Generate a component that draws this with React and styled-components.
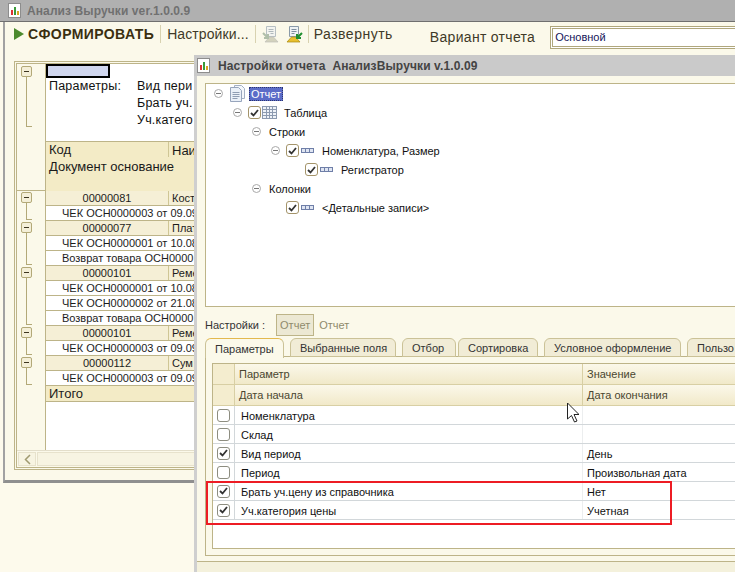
import React from "react";
import styled, { createGlobalStyle } from "styled-components";

const GlobalStyle = createGlobalStyle`
  html, body { margin: 0; padding: 0; background: #fdfaec; }
  body { font-family: "Liberation Sans", Arial, sans-serif; font-size: 11px; color: #1c1c1c; }
  * { box-sizing: border-box; }
`;

const LINE = "#bdb488";

const Desktop = styled.div`
  position: relative;
  width: 735px;
  height: 572px;
  overflow: hidden;
  background: #fdfaec;
`;

/* main report window */
const MainWindow = styled.div`
  width: 735px;
  height: 483px;
  display: flex;
  flex-direction: column;
`;
const TitleBar = styled.div`
  height: 22px;
  flex: none;
  display: flex;
  align-items: center;
  gap: 4px;
  padding-left: 8px;
  background: #b0b0b0;
  border-bottom: 1px solid #6f6f6f;
  font-size: 12px;
  font-weight: bold;
  letter-spacing: 0.1px;
  color: #707070;
`;
const WindowBody = styled.div`
  flex: 1;
  min-height: 0;
  margin-left: 3px;
  display: flex;
  flex-direction: column;
  background: #fbf9ea;
  border-left: 2px solid #a2a2a2;
  border-bottom: 3px solid #8f8f8f;
`;
const Toolbar = styled.div`
  height: 33px;
  flex: none;
  display: flex;
  align-items: center;
  padding-left: 9px;
  color: #3f3a28;
`;
const ToolGroup = styled.div`
  display: flex;
  align-items: center;
  margin-bottom: 9px;
`;
const RunButton = styled.div`
  display: flex;
  align-items: center;
  gap: 4px;
  font-size: 14px;
  font-weight: bold;
  letter-spacing: 0.4px;
  color: #3a2f10;
`;
const ToolSep = styled.div`
  width: 1px;
  height: 18px;
  background: #d8d2b0;
  margin: 0 ${(p) => p.$gap || 7}px;
`;
const ToolText = styled.div`
  font-size: 14px;
  letter-spacing: ${(p) => p.$spacing}px;
  white-space: nowrap;
`;
const VariantLabel = styled(ToolText)`
  margin: 0 0 3px 37px;
`;
const ToolIcons = styled.div`
  display: flex;
  gap: 7px;
`;
const VariantInput = styled.div`
  margin: 0 0 3px 15px;
  flex: 1;
  height: 23px;
  border: 3px double #b0a77c;
  border-right: 0;
  background: #fff;
  display: flex;
  align-items: center;
  padding-left: 2px;
  font-size: 11px;
  color: #14145a;
`;

/* report sheet */
const ReportFrame = styled.div`
  margin: 6px 0 10px 9px;
  flex: 1;
  min-height: 0;
  display: flex;
  flex-direction: column;
  border: 3px double ${LINE};
  border-right: 0;
`;
const ReportBody = styled.div`
  flex: 1;
  min-height: 0;
  display: flex;
`;
const Gutter = styled.div`
  width: 29px;
  flex: none;
  border-right: 1px solid ${LINE};
  display: flex;
  flex-direction: column;
`;
const GutterHead = styled.div`
  height: 127px;
  border-bottom: 1px solid ${LINE};
  padding-top: 1px;
`;
const Group = styled.div`
  height: ${(p) => p.$h}px;
  position: relative;
`;
const GroupBox = styled.div`
  position: absolute;
  left: 4px;
  top: 1px;
  width: 11px;
  height: 11px;
  border: 1px solid #b3a978;
  border-radius: 2px;
  background: #f4efd8;
  &::after {
    content: "";
    position: absolute;
    left: 2px;
    right: 2px;
    top: 4px;
    height: 1px;
    background: #3d3520;
  }
`;
const GroupLine = styled.div`
  position: absolute;
  left: 9px;
  top: 12px;
  width: 6px;
  bottom: 1px;
  border-left: 1px solid #b3a978;
  border-bottom: 1px solid #b3a978;
`;
const Sheet = styled.div`
  flex: 1;
  min-width: 0;
  background: #fff;
  overflow: hidden;
`;
const ParamBlock = styled.div`
  height: 77px;
  padding: 0 0 0 3px;
`;
const BlankCell = styled.div`
  width: 64px;
  height: 14px;
  margin: 0 0 0 -3px;
  border: 2px solid #000;
  background: #d0d6ee;
`;
const ParamLine = styled.div`
  height: 17px;
  display: flex;
  font-size: 12.5px;
  letter-spacing: 0.2px;
  line-height: 17px;
  white-space: nowrap;
  color: #111;
`;
const ParamName = styled.div`
  width: 88px;
`;
const HeadRow = styled.div`
  display: flex;
  height: ${(p) => p.$h}px;
  background: #f3ebc6;
  border-top: ${(p) => (p.$top ? `1px solid ${LINE}` : 0)};
  font-size: 13px;
  white-space: nowrap;
  line-height: 15px;
  color: #1a1a1a;
  padding: ${(p) => (p.$top ? 1 : 2)}px 0 0 3px;
`;
const HeadFirst = styled.div`
  width: 120px;
  border-right: 1px solid #cfc695;
  margin-top: -1px;
`;
const HeadNext = styled.div`
  padding-left: 3px;
`;
const DataRow = styled.div`
  height: 15px;
  display: flex;
  align-items: center;
  border-bottom: 1px solid ${LINE};
  background: ${(p) => (p.$group ? "#f5efd6" : "#fff")};
  white-space: nowrap;
  font-size: 11px;
  padding-left: ${(p) => (p.$group ? 0 : 16)}px;
`;
const CodeCell = styled.div`
  width: 123px;
  height: 100%;
  line-height: 14px;
  text-align: center;
  border-right: 1px solid #cfc695;
`;
const NameCell = styled.div`
  padding-left: 3px;
`;
const TotalRow = styled.div`
  height: 16px;
  background: #f3ebc6;
  border-bottom: 1px solid ${LINE};
  font-size: 13px;
  line-height: 15px;
  padding-left: 3px;
`;
const ScrollBar = styled.div`
  height: 17px;
  flex: none;
  display: flex;
  padding: 1px 0;
  background: #fbf9ea;
  border-top: 1px solid #e3deca;
`;
const ScrollBtn = styled.div`
  width: 18px;
  margin: 0 1px 0 1px;
  border: 1px solid #e7e2cc;
  background: #f7f4e2;
  display: flex;
  align-items: center;
  justify-content: center;
`;
const ScrollTrack = styled.div`
  flex: 1;
  background: #f7f4e2;
  border: 1px solid #e7e2cc;
`;

/* settings dialog */
const Dialog = styled.div`
  position: absolute;
  left: 194px;
  top: 55px;
  right: 0;
  bottom: 0;
  display: flex;
  flex-direction: column;
  background: #fbf9ea;
  border-left: 3px solid #cfcfcf;
`;
const DialogTitle = styled.div`
  height: 21px;
  flex: none;
  display: flex;
  align-items: center;
  gap: 6px;
  padding-left: 3px;
  margin-left: -3px;
  background: #cacaca;
  font-size: 12px;
  font-weight: bold;
  letter-spacing: 0.12px;
  white-space: pre;
  color: #444;
`;
const DialogBody = styled.div`
  flex: 1;
  min-height: 0;
  padding: 7px 0 5px 8px;
  display: flex;
  flex-direction: column;
`;
const TreePanel = styled.div`
  height: 224px;
  flex: none;
  margin-right: -2px;
  background: #fff;
  border: 1px solid ${LINE};
`;
const TreeRow = styled.div`
  height: 19px;
  display: flex;
  align-items: center;
  padding-left: ${(p) => p.$indent}px;
  white-space: nowrap;
  color: #111;
`;
const Toggle = styled.svg`
  width: 9px;
  height: 9px;
  margin-right: 6px;
  flex: none;
`;
const TreeLabel = styled.span`
  margin-left: ${(p) => p.$left || 0}px;
  padding: 1px 2px;
  background: ${(p) => (p.$selected ? "#5b6cc8" : "transparent")};
  color: ${(p) => (p.$selected ? "#fff" : "#111")};
  outline: ${(p) => (p.$selected ? "1px dotted #2c3570" : "none")};
  outline-offset: -1px;
`;
const SettingsRow = styled.div`
  height: 31px;
  flex: none;
  display: flex;
  align-items: center;
  padding-top: 5px;
  font-size: 11px;
  color: #333;
`;
const ReportChip = styled.div`
  height: 22px;
  padding: 0 3px;
  margin-left: ${(p) => p.$left}px;
  display: flex;
  align-items: center;
  color: #8f8a6c;
  background: ${(p) => (p.$active ? "#ece8d3" : "transparent")};
  border: 1px solid ${(p) => (p.$active ? LINE : "transparent")};
`;
const TabStrip = styled.div`
  height: 19px;
  flex: none;
  display: flex;
  gap: 6px;
  position: relative;
  z-index: 1;
`;
const Tab = styled.div`
  width: ${(p) => p.$w}px;
  flex: none;
  height: ${(p) => (p.$active ? 20 : 19)}px;
  margin-right: ${(p) => p.$after || 0}px;
  border: 1px solid #cbc297;
  border-bottom: ${(p) => (p.$active ? 0 : `1px solid #cbc297`)};
  border-top-color: ${(p) => (p.$active ? "#e3b94f" : "#cbc297")};
  border-radius: 6px 6px 0 0;
  background: ${(p) => (p.$active ? "#fbf9ea" : "#f1ecd6")};
  display: flex;
  align-items: center;
  padding-left: 9px;
  font-size: 11px;
  white-space: nowrap;
  overflow: hidden;
  color: #333;
`;
const TabPanel = styled.div`
  flex: 1;
  min-height: 0;
  margin-top: -1px;
  margin-right: -2px;
  border: 1px solid ${LINE};
  border-right: 0;
  padding: 6px 0 6px 6px;
  display: flex;
`;
const ParamTable = styled.div`
  position: relative;
  flex: 1;
  background: #fff;
  border: 1px solid ${LINE};
  border-right: 0;
`;
const TableHead = styled.div`
  height: 21px;
  display: flex;
  background: linear-gradient(#fbf8ea, #f1e9c9);
  border-bottom: 1px solid #d8cfa4;
  color: #4a4630;
  font-size: 11px;
`;
const Cell = styled.div`
  display: flex;
  align-items: center;
  flex: none;
  white-space: nowrap;
  width: ${(p) => p.$w || 0}px;
  ${(p) => (p.$w ? "" : "flex: 1;")}
  padding-left: ${(p) => p.$pad ?? 4}px;
  border-right: ${(p) => (p.$line ? `1px solid ${p.$line}` : 0)};
`;
const RowCell = styled(Cell)`
  padding-top: 2px;
`;
const CheckCell = styled(Cell)`
  justify-content: center;
  padding-left: 0;
  background: ${(p) => p.$bg || "transparent"};
`;
const TableRow = styled.div`
  height: 19px;
  display: flex;
  border-bottom: 1px solid #d2d7da;
  font-size: 11px;
  color: #111;
`;
const CheckBox = styled.div`
  width: 13px;
  height: 13px;
  flex: none;
  margin-right: ${(p) => p.$after || 0}px;
  border: 1px solid ${(p) => p.$border || "#8d8d80"};
  border-radius: 3px;
  background: #fff;
  display: flex;
  align-items: center;
  justify-content: center;
`;
const RedMark = styled.div`
  position: absolute;
  left: -7px;
  top: 117px;
  width: 466px;
  height: 44px;
  border: 2px solid #ed1c24;
  pointer-events: none;
`;
const DialogFoot = styled.div`
  height: 11px;
  flex: none;
  background: #f4f1dc;
  border-top: 1px solid ${LINE};
`;
const Pointer = styled.svg`
  position: absolute;
  left: 566px;
  top: 402px;
`;

const Tick = () => (
  <svg width="9" height="8" viewBox="0 0 9 8">
    <path d="M1 4l2.5 2.5L8 1" fill="none" stroke="#333" strokeWidth="1.8" />
  </svg>
);

const Check = ({ on, after, border }) => (
  <CheckBox $after={after} $border={border}>
    {on && <Tick />}
  </CheckBox>
);

const Minus = () => (
  <Toggle viewBox="0 0 9 9">
    <circle cx="4.5" cy="4.5" r="4" fill="#fff" stroke="#a9a9a9" />
    <path d="M2 4.5h5" stroke="#777" />
  </Toggle>
);

const BarsIcon = () => (
  <svg width="15" height="15" viewBox="0 0 15 15">
    <rect x=".5" y=".5" width="12" height="14" fill="#fff" stroke="#8d8d8d" />
    <rect x="3" y="7" width="2" height="5" fill="#d33" />
    <rect x="6" y="4" width="2" height="8" fill="#3a9a3a" />
    <rect x="9" y="8" width="2" height="4" fill="#d9a520" />
  </svg>
);

const ReportIcon = ({ faded }) => (
  <svg width="17" height="17" viewBox="0 0 17 17" opacity={faded ? 0.6 : 1}>
    <g transform={faded ? "translate(17 0) scale(-1 1)" : undefined}>
      <path d="M3.500 .5h9v10h-9z" fill="#eef2f4" stroke="#8a9aa8" />
      <path d="M5.500 3.500h5M5.500 5.500h5M5.500 7.500h3" stroke="#7f8f9f" />
      <path d="M1 16l4.500-5h4l4.500 5z" fill={faded ? "#b9b9a0" : "#e8c030"} stroke={faded ? "#999" : "#a88810"} strokeWidth=".7" />
      <path d="M16 7l-5 5M11 8v4h4" fill="none" stroke={faded ? "#7f9a7f" : "#1f8f2f"} strokeWidth="2" />
    </g>
  </svg>
);

const DocIcon = () => (
  <svg width="17" height="17" viewBox="0 0 17 17">
    <path d="M5.500 .5h7l3 3v10h-10z" fill="#f4f7fb" stroke="#a3b0c4" />
    <path d="M1.500 2.500h8l3 3v11h-11z" fill="#eaf0f8" stroke="#97a5bc" />
    <path d="M3.500 7.500h7M3.500 9.500h7M3.500 11.500h7M3.500 13.500h5" stroke="#8f9db3" />
  </svg>
);

const TableIcon = () => (
  <svg width="15" height="13" viewBox="0 0 15 13">
    <rect x=".5" y=".5" width="14" height="12" fill="#eef2f8" stroke="#8c9ab0" />
    <path d="M.5 3.500h14M.5 6.500h14M.5 9.500h14M4.500 .5v12M7.500 .5v12M10.500 .5v12" stroke="#8c9ab0" />
  </svg>
);

const FieldIcon = () => (
  <svg width="13" height="5" viewBox="0 0 13 5">
    <path d="M0 0h13v5H0z" fill="#6f7fa8" />
    <path d="M1 1h3v3H1zM5 1h3v3H5zM9 1h3v3H9z" fill="#dfe5f2" />
  </svg>
);

const groups = [
  { h: 30, code: "00000081", name: "Кост", docs: ["ЧЕК ОСН0000003 от 09.09"] },
  {
    h: 45,
    code: "00000077",
    name: "Плат",
    docs: ["ЧЕК ОСН0000001 от 10.08", "Возврат товара ОСН0000"],
  },
  {
    h: 60,
    code: "00000101",
    name: "Реме",
    docs: ["ЧЕК ОСН0000001 от 10.08", "ЧЕК ОСН0000002 от 21.08", "Возврат товара ОСН0000"],
  },
  { h: 30, code: "00000101", name: "Реме", docs: ["ЧЕК ОСН0000003 от 09.09"] },
  { h: 30, code: "00000112", name: "Сум", docs: ["ЧЕК ОСН0000003 от 09.09"] },
];

const tabs = [
  { label: "Параметры", w: 79, active: true },
  { label: "Выбранные поля", w: 106 },
  { label: "Отбор", w: 54, after: -4 },
  { label: "Сортировка", w: 80 },
  { label: "Условное оформление", w: 137 },
  { label: "Пользо", w: 60 },
];

const params = [
  { name: "Номенклатура", on: false, value: "" },
  { name: "Склад", on: false, value: "" },
  { name: "Вид период", on: true, value: "День" },
  { name: "Период", on: false, value: "Произвольная дата" },
  { name: "Брать уч.цену из справочника", on: true, value: "Нет" },
  { name: "Уч.категория цены", on: true, value: "Учетная" },
];

const App = () => {
  return (
    <Desktop>
      <GlobalStyle />
      <MainWindow>
        <TitleBar>
          <BarsIcon />
          Анализ Выручки ver.1.0.0.9
        </TitleBar>
        <WindowBody>
          <Toolbar>
            <ToolGroup>
              <RunButton>
                <svg width="10" height="12" viewBox="0 0 10 12">
                  <path d="M0 0l10 6-10 6z" fill="#4c8a2d" />
                </svg>
                СФОРМИРОВАТЬ
              </RunButton>
              <ToolSep $gap={6} />
              <ToolText $spacing={0.1}>Настройки...</ToolText>
              <ToolSep $gap={6} />
              <ToolIcons>
                <ReportIcon faded />
                <ReportIcon />
              </ToolIcons>
              <ToolSep $gap={5} />
              <ToolText $spacing={0.5}>Развернуть</ToolText>
            </ToolGroup>
            <VariantLabel $spacing={0.3}>Вариант отчета</VariantLabel>
            <VariantInput>Основной</VariantInput>
          </Toolbar>
          <ReportFrame>
            <ReportBody>
              <Gutter>
                <GutterHead>
                  <Group $h={63}>
                    <GroupBox />
                    <GroupLine />
                  </Group>
                </GutterHead>
                {groups.map((g, i) => (
                  <Group $h={g.h} key={i}>
                    <GroupBox />
                    <GroupLine />
                  </Group>
                ))}
              </Gutter>
              <Sheet>
                <ParamBlock>
                  <BlankCell />
                  <ParamLine>
                    <ParamName>Параметры:</ParamName>
                    Вид пери
                  </ParamLine>
                  <ParamLine>
                    <ParamName />
                    Брать уч.
                  </ParamLine>
                  <ParamLine>
                    <ParamName />
                    Уч.катего
                  </ParamLine>
                </ParamBlock>
                <HeadRow $h={16} $top>
                  <HeadFirst>Код</HeadFirst>
                  <HeadNext>Наи</HeadNext>
                </HeadRow>
                <HeadRow $h={34}>Документ основание</HeadRow>
                {groups.map((g, i) => (
                  <React.Fragment key={i}>
                    <DataRow $group>
                      <CodeCell>{g.code}</CodeCell>
                      <NameCell>{g.name}</NameCell>
                    </DataRow>
                    {g.docs.map((d, j) => (
                      <DataRow key={j}>{d}</DataRow>
                    ))}
                  </React.Fragment>
                ))}
                <TotalRow>Итого</TotalRow>
              </Sheet>
            </ReportBody>
            <ScrollBar>
              <ScrollBtn>
                <svg width="7" height="11" viewBox="0 0 7 11">
                  <path d="M6 1L1.500 5.500 6 10" fill="none" stroke="#a09a70" strokeWidth="1.500" />
                </svg>
              </ScrollBtn>
              <ScrollTrack />
            </ScrollBar>
          </ReportFrame>
        </WindowBody>
      </MainWindow>

      <Dialog>
        <DialogTitle>
          <BarsIcon />
          Настройки отчета  АнализВыручки v.1.0.09
        </DialogTitle>
        <DialogBody>
          <TreePanel>
            <TreeRow $indent={8}>
              <Minus />
              <DocIcon />
              <TreeLabel $selected $left={3}>
                Отчет
              </TreeLabel>
            </TreeRow>
            <TreeRow $indent={27}>
              <Minus />
              <Check on after={1} border="#a4946a" />
              <TableIcon />
              <TreeLabel $left={5}>Таблица</TreeLabel>
            </TreeRow>
            <TreeRow $indent={46}>
              <Minus />
              <TreeLabel>Строки</TreeLabel>
            </TreeRow>
            <TreeRow $indent={65}>
              <Minus />
              <Check on after={2} border="#a4946a" />
              <FieldIcon />
              <TreeLabel $left={6}>Номенклатура, Размер</TreeLabel>
            </TreeRow>
            <TreeRow $indent={99}>
              <Check on after={2} border="#a4946a" />
              <FieldIcon />
              <TreeLabel $left={6}>Регистратор</TreeLabel>
            </TreeRow>
            <TreeRow $indent={46}>
              <Minus />
              <TreeLabel>Колонки</TreeLabel>
            </TreeRow>
            <TreeRow $indent={80}>
              <Check on after={2} border="#a4946a" />
              <FieldIcon />
              <TreeLabel $left={6}>&lt;Детальные записи&gt;</TreeLabel>
            </TreeRow>
          </TreePanel>
          <SettingsRow>
            Настройки :
            <ReportChip $active $left={11}>
              Отчет
            </ReportChip>
            <ReportChip $left={1}>Отчет</ReportChip>
          </SettingsRow>
          <TabStrip>
            {tabs.map((t) => (
              <Tab key={t.label} $w={t.w} $active={t.active} $after={t.after}>
                {t.label}
              </Tab>
            ))}
          </TabStrip>
          <TabPanel>
            <ParamTable>
              <TableHead>
                <CheckCell $w={22} $line="#d8cfa4" $bg="#f4edcf" />
                <Cell $w={348} $line="#d8cfa4">
                  Параметр
                </Cell>
                <Cell>Значение</Cell>
              </TableHead>
              <TableHead>
                <CheckCell $w={22} $line="#d8cfa4" $bg="#f4edcf" />
                <Cell $w={348} $line="#d8cfa4">
                  Дата начала
                </Cell>
                <Cell>Дата окончания</Cell>
              </TableHead>
              {params.map((p) => (
                <TableRow key={p.name}>
                  <CheckCell $w={22} $line="#d2d7da">
                    <Check on={p.on} />
                  </CheckCell>
                  <RowCell $w={348} $line="#eceeef" $pad={6}>
                    {p.name}
                  </RowCell>
                  <RowCell>{p.value}</RowCell>
                </TableRow>
              ))}
              <RedMark />
            </ParamTable>
          </TabPanel>
        </DialogBody>
        <DialogFoot />
      </Dialog>
      <Pointer width="13" height="22" viewBox="0 0 13 22">
        <path d="M1.500 1v16l4-3.500 3 6.500 2.500-1-3-6.500h5z" fill="#fff" stroke="#222" />
      </Pointer>
    </Desktop>
  );
};

export default App;
